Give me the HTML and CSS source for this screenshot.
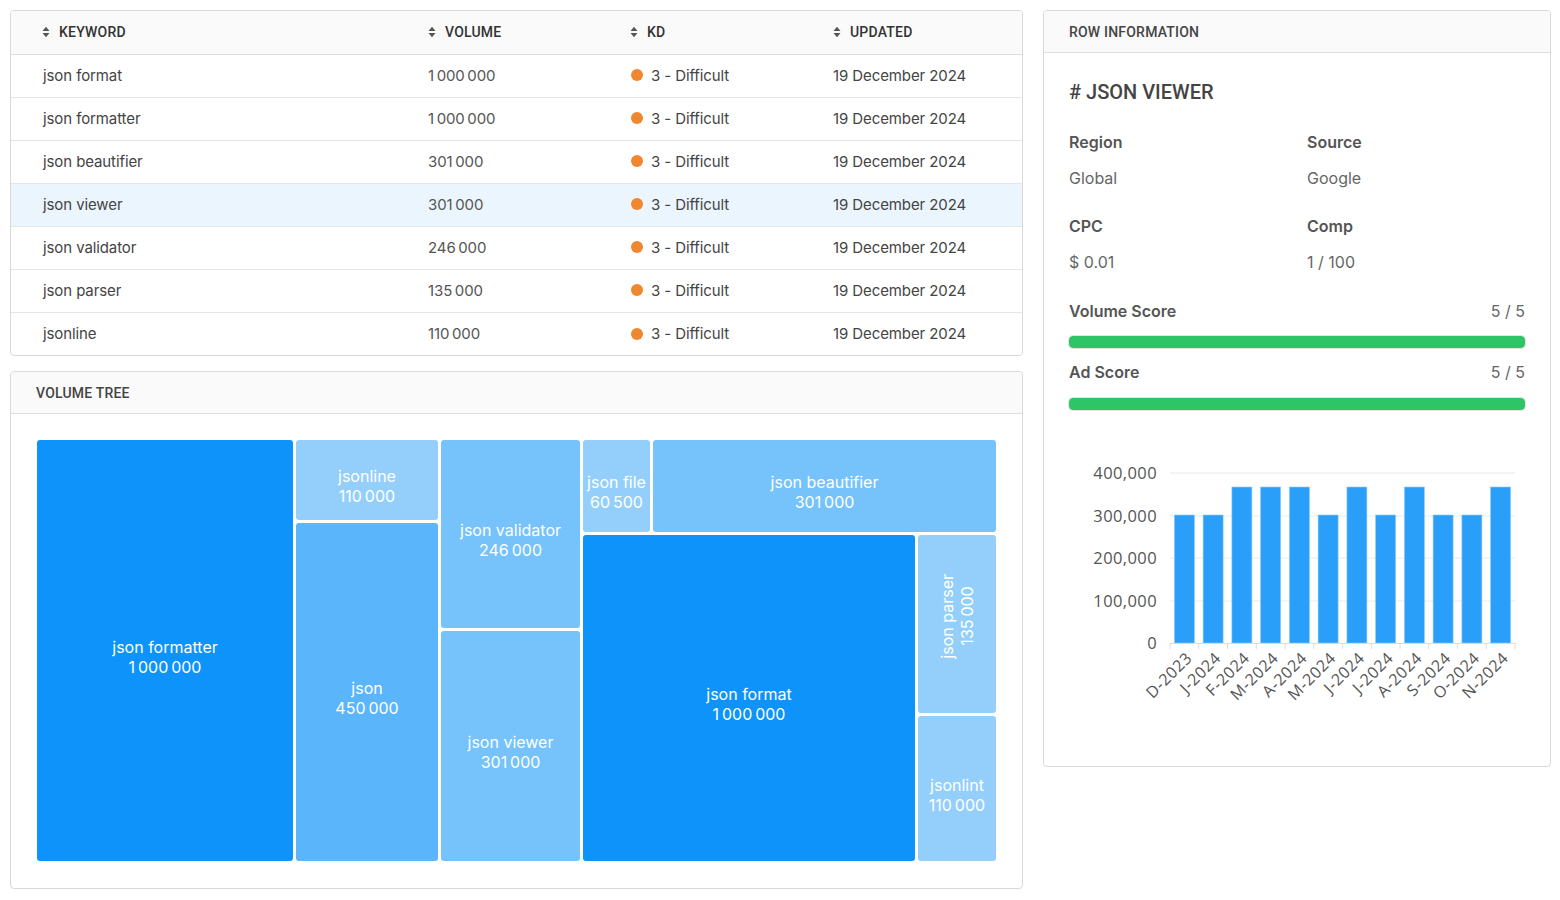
FILE: index.html
```html
<!DOCTYPE html>
<html lang="en">
<head>
<meta charset="utf-8">
<title>Keywords</title>
<link rel="stylesheet" href="styles.css">
</head>
<body>
<div class="page">
  <div class="left">
    <div class="card table-card">
      <table class="kw">
        <colgroup><col class="c1"><col class="c2"><col class="c3"><col class="c4"></colgroup>
        <thead>
          <tr>
            <th class="first"><span class="th"><svg class="sort" viewBox="0 0 8 12"><path d="M0.5 5 L4 0.8 L7.5 5Z M0.5 7 L4 11.2 L7.5 7Z"/></svg>KEYWORD</span></th>
            <th><span class="th"><svg class="sort" viewBox="0 0 8 12"><path d="M0.5 5 L4 0.8 L7.5 5Z M0.5 7 L4 11.2 L7.5 7Z"/></svg>VOLUME</span></th>
            <th><span class="th"><svg class="sort" viewBox="0 0 8 12"><path d="M0.5 5 L4 0.8 L7.5 5Z M0.5 7 L4 11.2 L7.5 7Z"/></svg>KD</span></th>
            <th><span class="th"><svg class="sort" viewBox="0 0 8 12"><path d="M0.5 5 L4 0.8 L7.5 5Z M0.5 7 L4 11.2 L7.5 7Z"/></svg>UPDATED</span></th>
          </tr>
        </thead>
        <tbody>
          <tr><td class="first">json format</td><td class="num">1&thinsp;000&thinsp;000</td><td><span class="kd"><i class="dot"></i>3 - Difficult</span></td><td>19 December 2024</td></tr>
          <tr><td class="first">json formatter</td><td class="num">1&thinsp;000&thinsp;000</td><td><span class="kd"><i class="dot"></i>3 - Difficult</span></td><td>19 December 2024</td></tr>
          <tr><td class="first">json beautifier</td><td class="num">301&thinsp;000</td><td><span class="kd"><i class="dot"></i>3 - Difficult</span></td><td>19 December 2024</td></tr>
          <tr class="selected"><td class="first">json viewer</td><td class="num">301&thinsp;000</td><td><span class="kd"><i class="dot"></i>3 - Difficult</span></td><td>19 December 2024</td></tr>
          <tr><td class="first">json validator</td><td class="num">246&thinsp;000</td><td><span class="kd"><i class="dot"></i>3 - Difficult</span></td><td>19 December 2024</td></tr>
          <tr><td class="first">json parser</td><td class="num">135&thinsp;000</td><td><span class="kd"><i class="dot"></i>3 - Difficult</span></td><td>19 December 2024</td></tr>
          <tr class="last"><td class="first">jsonline</td><td class="num">110&thinsp;000</td><td><span class="kd"><i class="dot"></i>3 - Difficult</span></td><td>19 December 2024</td></tr>
        </tbody>
      </table>
    </div>

    <div class="card tree-card">
      <div class="card-head">VOLUME TREE</div>
      <div class="tree-body">
        <div class="treemap">
          <div class="tile deep w-formatter"><span>json formatter<br>1&thinsp;000&thinsp;000</span></div>
          <div class="tcol w-c2">
            <div class="tile light h-jsonline"><span>jsonline<br>110&thinsp;000</span></div>
            <div class="tile mid grow"><span>json<br>450&thinsp;000</span></div>
          </div>
          <div class="tcol w-c3">
            <div class="tile soft h-validator"><span>json validator<br>246&thinsp;000</span></div>
            <div class="tile soft grow"><span>json viewer<br>301&thinsp;000</span></div>
          </div>
          <div class="tcol grow">
            <div class="trow h-top">
              <div class="tile light w-file"><span>json file<br>60&thinsp;500</span></div>
              <div class="tile soft grow"><span>json beautifier<br>301&thinsp;000</span></div>
            </div>
            <div class="trow grow">
              <div class="tile deep w-format"><span>json format<br>1&thinsp;000&thinsp;000</span></div>
              <div class="tcol grow">
                <div class="tile light h-parser vert"><span>json parser<br>135&thinsp;000</span></div>
                <div class="tile light grow"><span>jsonlint<br>110&thinsp;000</span></div>
              </div>
            </div>
          </div>
        </div>
      </div>
    </div>
  </div>

  <div class="card info-card">
    <div class="card-head">ROW INFORMATION</div>
    <div class="info-body">
      <h2 class="title"># JSON VIEWER</h2>
      <div class="facts">
        <div class="fact"><div class="label">Region</div><div class="value">Global</div></div>
        <div class="fact"><div class="label">Source</div><div class="value">Google</div></div>
        <div class="fact"><div class="label">CPC</div><div class="value">$ 0.01</div></div>
        <div class="fact"><div class="label">Comp</div><div class="value">1 / 100</div></div>
      </div>
      <div class="score">
        <div class="score-head"><span class="label">Volume Score</span><span class="score-val">5 / 5</span></div>
        <div class="bar"><div class="fill" style="width:100%"></div></div>
      </div>
      <div class="score">
        <div class="score-head"><span class="label">Ad Score</span><span class="score-val">5 / 5</span></div>
        <div class="bar"><div class="fill" style="width:100%"></div></div>
      </div>
      <svg class="chart" viewBox="0 0 456 250" width="456" height="250">
        <g class="grid">
          <line x1="101" y1="17" x2="446" y2="17"/>
          <line x1="101" y1="60" x2="446" y2="60"/>
          <line x1="101" y1="102" x2="446" y2="102"/>
          <line x1="101" y1="145" x2="446" y2="145"/>
        </g>
        <g class="ylab">
          <text x="88" y="23">400,000</text>
          <text x="88" y="66">300,000</text>
          <text x="88" y="108">200,000</text>
          <text x="88" y="151">100,000</text>
          <text x="88" y="193">0</text>
        </g>
        <g class="bars">
          <rect x="105.4" y="59" width="20" height="128"/>
          <rect x="134.1" y="59" width="20" height="128"/>
          <rect x="162.9" y="31" width="20" height="156"/>
          <rect x="191.6" y="31" width="20" height="156"/>
          <rect x="220.4" y="31" width="20" height="156"/>
          <rect x="249.1" y="59" width="20" height="128"/>
          <rect x="277.9" y="31" width="20" height="156"/>
          <rect x="306.6" y="59" width="20" height="128"/>
          <rect x="335.4" y="31" width="20" height="156"/>
          <rect x="364.1" y="59" width="20" height="128"/>
          <rect x="392.9" y="59" width="20" height="128"/>
          <rect x="421.6" y="31" width="20" height="156"/>
        </g>
        <g class="axis">
          <line x1="101" y1="187.5" x2="446" y2="187.5"/>
          <line x1="101" y1="187" x2="101" y2="193"/>
          <line x1="129.75" y1="187" x2="129.75" y2="193"/>
          <line x1="158.5" y1="187" x2="158.5" y2="193"/>
          <line x1="187.25" y1="187" x2="187.25" y2="193"/>
          <line x1="216" y1="187" x2="216" y2="193"/>
          <line x1="244.75" y1="187" x2="244.75" y2="193"/>
          <line x1="273.5" y1="187" x2="273.5" y2="193"/>
          <line x1="302.25" y1="187" x2="302.25" y2="193"/>
          <line x1="331" y1="187" x2="331" y2="193"/>
          <line x1="359.75" y1="187" x2="359.75" y2="193"/>
          <line x1="388.5" y1="187" x2="388.5" y2="193"/>
          <line x1="417.25" y1="187" x2="417.25" y2="193"/>
          <line x1="446" y1="187" x2="446" y2="193"/>
        </g>
        <g class="xlab">
          <text transform="translate(121,200) rotate(-45)">D-2023</text>
          <text transform="translate(149.8,200) rotate(-45)">J-2024</text>
          <text transform="translate(178.5,200) rotate(-45)">F-2024</text>
          <text transform="translate(207.3,200) rotate(-45)">M-2024</text>
          <text transform="translate(236,200) rotate(-45)">A-2024</text>
          <text transform="translate(264.8,200) rotate(-45)">M-2024</text>
          <text transform="translate(293.5,200) rotate(-45)">J-2024</text>
          <text transform="translate(322.3,200) rotate(-45)">J-2024</text>
          <text transform="translate(351,200) rotate(-45)">A-2024</text>
          <text transform="translate(379.8,200) rotate(-45)">S-2024</text>
          <text transform="translate(408.5,200) rotate(-45)">O-2024</text>
          <text transform="translate(437.3,200) rotate(-45)">N-2024</text>
        </g>
      </svg>
    </div>
  </div>
</div>
</body>
</html>
```

FILE: styles.css
```css
* { box-sizing: border-box; }

html, body {
  margin: 0;
  padding: 0;
  background: #ffffff;
}

body {
  font-family: "Inter", "Noto Sans", "Liberation Sans", sans-serif;
  color: #444;
}

.page {
  display: grid;
  grid-template-columns: 1013px 508px;
  column-gap: 20px;
  align-items: start;
  padding: 10px;
}

.left {
  display: flex;
  flex-direction: column;
  gap: 15px;
}

.card {
  background: #fff;
  border: 1px solid #d9d9d9;
  border-radius: 4px;
  overflow: hidden;
}

.card-head {
  height: 42px;
  display: flex;
  align-items: center;
  padding: 0 25px;
  background: #fafafa;
  border-bottom: 1px solid #dedede;
  font-family: "Roboto", "Liberation Sans", sans-serif;
  font-weight: 500;
  font-size: 14px;
  letter-spacing: 0.2px;
  color: #444;
}

/* ---------- table ---------- */
.kw {
  width: 100%;
  border-collapse: collapse;
  table-layout: fixed;
}

.kw col.c1 { width: 417px; }
.kw col.c2 { width: 202px; }
.kw col.c3 { width: 203px; }
.kw col.c4 { width: auto; }

.kw th {
  height: 43px;
  text-align: left;
  padding: 0;
  background: #fafafa;
  border-bottom: 1px solid #dedede;
  font-family: "Roboto", "Liberation Sans", sans-serif;
  font-weight: 500;
  font-size: 14px;
  letter-spacing: 0.2px;
  color: #333;
}

.kw .first { padding-left: 31px; }

.th {
  display: inline-flex;
  align-items: center;
  gap: 9px;
}

.sort {
  width: 8px;
  height: 12px;
  fill: #555;
}

.kw td {
  height: 43px;
  padding: 0;
  border-bottom: 1px solid #e6e6e6;
  font-size: 15px;
  letter-spacing: -0.1px;
  color: #444;
  white-space: nowrap;
}

.kw td.first { padding-left: 32px; }

.kw td.num { color: #555; }

.kw tr.last td { border-bottom: none; }

.kw tr.selected td { background: #ebf5fe; }

.kd {
  display: inline-flex;
  align-items: center;
  gap: 8px;
  padding-left: 1px;
}

.dot {
  display: inline-block;
  width: 12px;
  height: 12px;
  border-radius: 50%;
  background: #f0862e;
}

/* ---------- treemap ---------- */
.tree-body {
  padding: 26px 26px 27px 26px;
}

.treemap {
  display: flex;
  gap: 3px;
  height: 421px;
}

.tcol {
  display: flex;
  flex-direction: column;
  gap: 3px;
}

.trow {
  display: flex;
  gap: 3px;
}

.grow { flex: 1 1 0; min-width: 0; min-height: 0; }

.tile {
  border-radius: 3px;
  display: flex;
  align-items: center;
  justify-content: center;
  text-align: center;
  color: #fff;
  font-size: 16px;
  line-height: 20px;
  padding-top: 12px;
  overflow: hidden;
}

.tile.vert {
  padding-top: 0;
  padding-bottom: 16px;
}

.tile.vert span {
  writing-mode: vertical-rl;
  transform: rotate(180deg);
}

.deep { background: #0e93fb; }
.mid { background: #5bb5fb; }
.soft { background: #76c2fb; }
.light { background: #94cffc; }

.w-formatter { width: 256px; flex: none; }
.w-c2 { width: 142px; flex: none; }
.w-c3 { width: 139px; flex: none; }
.h-jsonline { height: 80px; flex: none; }
.h-validator { height: 188px; flex: none; }
.h-top { height: 92px; flex: none; }
.w-file { width: 67px; flex: none; }
.w-format { width: 332px; flex: none; }
.h-parser { height: 178px; flex: none; }

/* ---------- info card ---------- */
.info-body {
  padding: 25px 25px 60px 25px;
}

.title {
  margin: 0;
  font-family: "Roboto", "Liberation Sans", sans-serif;
  font-weight: 500;
  font-size: 20px;
  line-height: 28px;
  color: #444;
}

.facts {
  display: grid;
  grid-template-columns: 238px 1fr;
  row-gap: 24px;
  margin-top: 24px;
}

.label {
  font-size: 16px;
  line-height: 24px;
  font-weight: 600;
  color: #555;
}

.value {
  margin-top: 12px;
  font-size: 16px;
  line-height: 24px;
  color: #666;
}

.score { margin-top: 25px; }
.score + .score { margin-top: 12px; }

.score-head {
  display: flex;
  justify-content: space-between;
  align-items: center;
}

.score-val {
  font-size: 16px;
  line-height: 24px;
  color: #666;
}

.bar {
  margin-top: 13px;
  height: 12px;
  border-radius: 4px;
  background: #eee;
  box-shadow: 0 0 0 1px #e3e3e3;
  overflow: hidden;
}

.score + .score .bar { margin-top: 14px; }

.fill {
  height: 100%;
  background: #2ec566;
  border-radius: 4px;
}

.chart {
  display: block;
  margin-top: 46px;
  overflow: visible;
}

.chart .grid line {
  stroke: #e9e9e9;
  stroke-width: 1;
}

.chart .axis line {
  stroke: #dcdcdc;
  stroke-width: 1;
}

.chart .bars rect {
  fill: #2a9ffa;
  stroke: #8ccbfc;
  stroke-width: 0.6;
}

.chart text {
  font-family: "Open Sans", "Liberation Sans", sans-serif;
  fill: #555;
}

.chart .ylab text {
  font-size: 16.5px;
  letter-spacing: 0.4px;
  text-anchor: end;
}

.chart .xlab text {
  font-size: 16px;
  letter-spacing: 0.6px;
  text-anchor: end;
  dominant-baseline: middle;
}
```
